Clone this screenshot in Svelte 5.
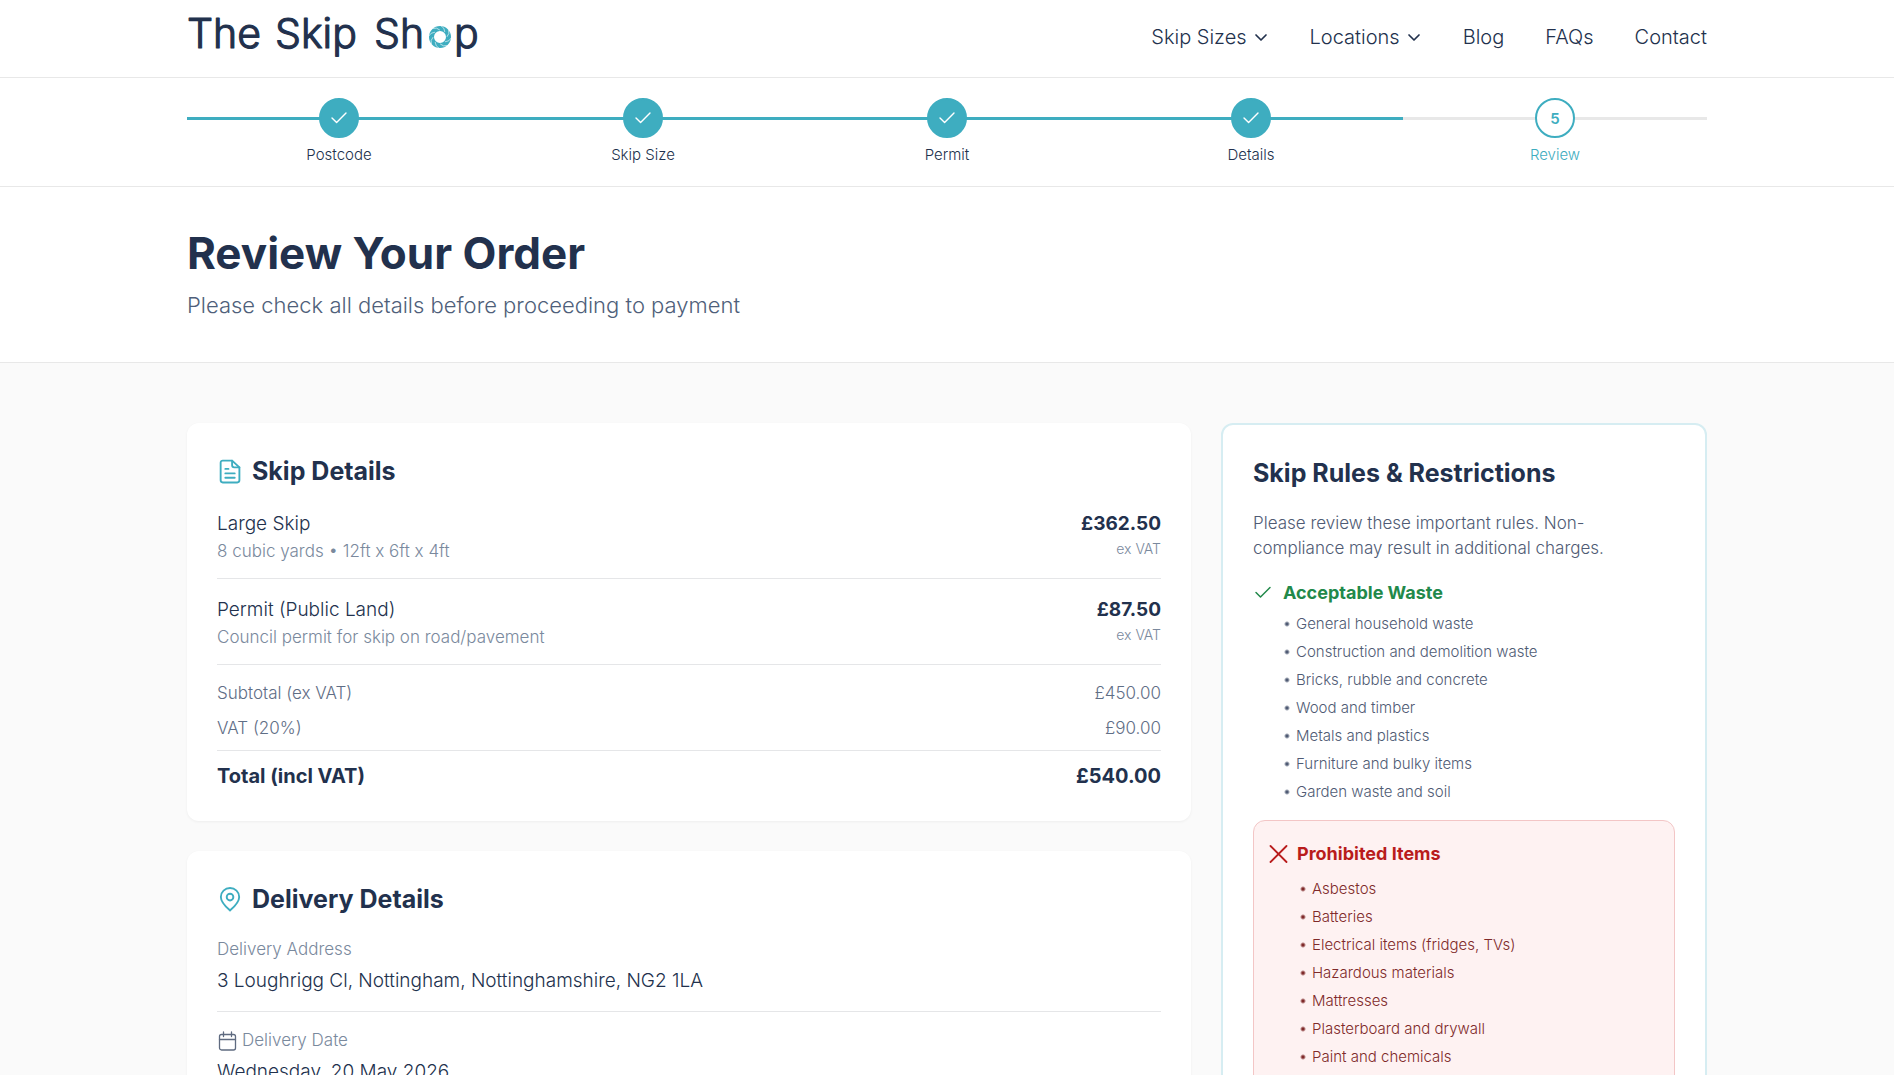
<script>
  const nav = [
    { label: 'Skip Sizes', menu: true },
    { label: 'Locations', menu: true },
    { label: 'Blog' },
    { label: 'FAQs' },
    { label: 'Contact' }
  ];
  const steps = ['Postcode', 'Skip Size', 'Permit', 'Details', 'Review'];
  const current = 4;
  const lines = [
    { name: 'Large Skip', note: '8 cubic yards • 12ft x 6ft x 4ft', price: '£362.50' },
    { name: 'Permit (Public Land)', note: 'Council permit for skip on road/pavement', price: '£87.50' }
  ];
  const acceptable = [
    'General household waste',
    'Construction and demolition waste',
    'Bricks, rubble and concrete',
    'Wood and timber',
    'Metals and plastics',
    'Furniture and bulky items',
    'Garden waste and soil'
  ];
  const prohibited = [
    'Asbestos',
    'Batteries',
    'Electrical items (fridges, TVs)',
    'Hazardous materials',
    'Mattresses',
    'Plasterboard and drywall',
    'Paint and chemicals'
  ];
  const blades = [0, 45, 90, 135, 180, 225, 270, 315];
</script>

<header class="bar">
  <div class="container head">
    <a class="logo" href="/" aria-label="The Skip Shop">
      <svg width="294" height="64" viewBox="0 0 294 64">
        <g class="word">
          <text x="0" y="48">The</text>
          <text x="88" y="48">Skip</text>
          <text x="187" y="48">Sh</text>
          <text x="267" y="48">p</text>
        </g>
        <g transform="translate(253 37)">
          <circle r="8.5" fill="none" stroke="#3eadc0" stroke-width="5" />
          {#each blades as a}
            <path d="M1 -11.2 Q4.600 -9.500 4.800 -5" transform="rotate({a})" fill="none" stroke="#fff" stroke-width="0.6" />
          {/each}
        </g>
      </svg>
    </a>
    <nav>
      {#each nav as item}
        {#if item.menu}
          <button type="button">
            {item.label}
            <svg width="16" height="16" viewBox="0 0 16 16" fill="none" stroke="currentColor" stroke-width="1.7" stroke-linecap="round" stroke-linejoin="round"><path d="M3 6l5 5 5-5" /></svg>
          </button>
        {:else}
          <a href="/{item.label.toLowerCase()}">{item.label}</a>
        {/if}
      {/each}
    </nav>
  </div>
</header>

<section class="bar">
  <ol class="container steps">
    {#each steps as step, i}
      <li class:done={i < current} class:active={i === current}>
        <div class="track">
          <span class="dot">
            {#if i < current}
              <svg width="20" height="20" viewBox="0 0 20 20" fill="none" stroke="currentColor" stroke-width="1.4" stroke-linecap="round" stroke-linejoin="round"><path d="M3 10l4.600 4.600L17 5" /></svg>
            {:else}
              {i + 1}
            {/if}
          </span>
        </div>
        <span class="step-name">{step}</span>
      </li>
    {/each}
  </ol>
</section>

<section class="bar">
  <div class="container hero">
    <h1>Review Your Order</h1>
    <p>Please check all details before proceeding to payment</p>
  </div>
</section>

<main>
  <div class="container grid">
    <div class="left">
      <section class="card">
        <h2>
          <svg width="25" height="25" viewBox="0 0 24 24" fill="none" stroke="#3eadc0" stroke-width="1.800" stroke-linecap="round" stroke-linejoin="round"><path d="M14.500 1.500H5.500a2 2 0 0 0-2 2v17a2 2 0 0 0 2 2h14a2 2 0 0 0 2-2V8z" /><path d="M14.500 1.500V6a2 2 0 0 0 2 2H21.500M8 9.500h3M8 13.800h9M8 18h9" /></svg>
          Skip Details
        </h2>
        {#each lines as line}
          <div class="row ruled priced">
            <div>
              <p class="item">{line.name}</p>
              <p class="note">{line.note}</p>
            </div>
            <div class="price">
              <strong>{line.price}</strong>
              <small>ex VAT</small>
            </div>
          </div>
        {/each}
        <div class="sums">
          <div class="row"><span>Subtotal (ex VAT)</span><span>£450.00</span></div>
          <div class="row"><span>VAT (20%)</span><span>£90.00</span></div>
        </div>
        <div class="row total"><span>Total (incl VAT)</span><span>£540.00</span></div>
      </section>

      <section class="card">
        <h2>
          <svg width="25" height="25" viewBox="0 0 24 24" fill="none" stroke="#3eadc0" stroke-width="1.800" stroke-linecap="round" stroke-linejoin="round"><path d="M12.500 22.500c-2-1.800-8.800-7.500-8.800-13a8.800 8.500 0 0 1 17.600 0C21.300 15 14.500 20.700 12.500 22.500z" /><circle cx="12.500" cy="9.700" r="3.200" /></svg>
          Delivery Details
        </h2>
        <div class="field ruled">
          <p class="note">Delivery Address</p>
          <p class="value">3 Loughrigg Cl, Nottingham, Nottinghamshire, NG2 1LA</p>
        </div>
        <div class="field">
          <p class="note dated">
            <svg width="20" height="20" viewBox="0 0 20 20" fill="none" stroke="#5f6b80" stroke-width="1.300" stroke-linecap="round" stroke-linejoin="round"><rect x="2.500" y="3.500" width="16" height="15.500" rx="2" /><path d="M2.500 8.500h16M6.500 1v4.500M14.500 1v4.500" /></svg>
            Delivery Date
          </p>
          <p class="value">Wednesday, 20 May 2026</p>
        </div>
      </section>
    </div>

    <aside class="rules">
      <h2>Skip Rules &amp; Restrictions</h2>
      <p class="intro">Please review these important rules. Non-compliance may result in additional charges.</p>
      <h3 class="ok">
        <svg width="20" height="20" viewBox="0 0 20 20" fill="none" stroke="currentColor" stroke-width="1.500" stroke-linecap="round" stroke-linejoin="round"><path d="M3 9.500l4.500 4.500L17 4.500" /></svg>
        Acceptable Waste
      </h3>
      <ul>
        {#each acceptable as t}<li>{t}</li>{/each}
      </ul>
      <div class="danger">
        <h3>
          <svg width="20" height="20" viewBox="0 0 20 20" fill="none" stroke="currentColor" stroke-width="1.800" stroke-linecap="round"><path d="M1.500 2l16 16M17.500 2l-16 16" /></svg>
          Prohibited Items
        </h3>
        <ul>
          {#each prohibited as t}<li>{t}</li>{/each}
        </ul>
      </div>
    </aside>
  </div>
</main>

<style>
  :global(body) {
    margin: 0;
    background: #fff;
    color: #22314d;
    font-family: Inter, "Liberation Sans", sans-serif;
    font-weight: 300;
  }
  h1, h2, h3, p, ul, ol {
    margin: 0;
    padding: 0;
    list-style: none;
  }
  svg {
    display: block;
    flex: none;
  }
  .container {
    box-sizing: border-box;
    width: 100%;
    max-width: 1520px;
    margin: 0 auto;
  }
  .bar {
    border-bottom: 1px solid #e8e8e8;
  }
  .head {
    display: flex;
    justify-content: space-between;
    align-items: flex-start;
    height: 77px;
  }
  .word {
    font-family: Inter, sans-serif;
    font-size: 41px;
    font-weight: 300;
    fill: #22314d;
    stroke: #22314d;
    stroke-width: 1.2px;
    stroke-linejoin: round;
  }
  nav {
    display: flex;
    align-items: center;
    align-self: center;
    gap: 41px;
    padding-bottom: 3px;
    font-size: 20px;
    line-height: 28px;
  }
  nav a, nav button {
    display: flex;
    align-items: center;
    gap: 6px;
    padding: 0;
    border: 0;
    background: none;
    color: inherit;
    font: inherit;
    text-decoration: none;
  }
  .steps {
    display: flex;
    padding: 20px 0;
  }
  .steps li {
    flex: 1;
    text-align: center;
  }
  .track {
    display: flex;
    justify-content: center;
    background: linear-gradient(#e8e8e8, #e8e8e8) center / 100% 3px no-repeat;
  }
  .done .track {
    background-image: linear-gradient(#3eadc0, #3eadc0);
  }
  .dot {
    box-sizing: border-box;
    display: flex;
    align-items: center;
    justify-content: center;
    width: 40px;
    height: 40px;
    border: 2px solid #3eadc0;
    border-radius: 50%;
    background: #fff;
    color: #3eadc0;
    font-size: 15px;
    font-weight: 600;
  }
  .done .dot {
    background: #3eadc0;
    color: #fff;
  }
  .step-name {
    display: block;
    margin-top: 6px;
    font-size: 15px;
    line-height: 22px;
  }
  .active .step-name {
    color: #3eadc0;
  }
  .hero {
    padding: 40px 0;
  }
  h1 {
    font-size: 44px;
    font-weight: 700;
    line-height: 52px;
  }
  .hero p {
    margin-top: 10px;
    color: #4f5f7a;
    font-size: 22px;
    line-height: 33px;
  }
  main {
    padding: 60px 0;
    background: #fafafa;
  }
  .grid {
    display: grid;
    grid-template-columns: minmax(0, 1004fr) minmax(0, 486fr);
    gap: 30px;
  }
  .left {
    display: flex;
    flex-direction: column;
    gap: 30px;
  }
  .card {
    padding: 30px;
    border-radius: 12px;
    background: #fff;
    box-shadow: 0 1px 3px rgba(0, 0, 0, 0.05);
  }
  h2 {
    display: flex;
    align-items: center;
    gap: 10px;
    font-size: 25px;
    font-weight: 700;
    line-height: 36px;
  }
  .card h2 {
    margin-bottom: 4px;
  }
  .row {
    display: flex;
    justify-content: space-between;
  }
  .field {
    padding: 15px 0;
  }
  .priced {
    padding: 16px 0 13px;
  }
  .ruled {
    border-bottom: 1px solid #e5e6e8;
  }
  .item {
    font-size: 19px;
    line-height: 29px;
  }
  .note {
    color: #7a899d;
    font-size: 17px;
    line-height: 27px;
  }
  .price {
    text-align: right;
  }
  .price strong {
    display: block;
    font-size: 19px;
    font-weight: 700;
    line-height: 29px;
  }
  .price small {
    display: block;
    color: #7a899d;
    font-size: 14px;
    line-height: 21px;
  }
  .sums {
    padding: 11px 0 4px;
    border-bottom: 1px solid #e5e6e8;
    color: #5f6e86;
    font-size: 17px;
    line-height: 35px;
  }
  .total {
    padding-top: 10px;
    font-size: 20px;
    font-weight: 700;
    line-height: 30px;
  }
  .dated {
    display: flex;
    align-items: center;
    gap: 5px;
  }
  .value {
    margin-top: 3px;
    font-size: 19px;
    line-height: 30px;
  }
  .rules {
    padding: 30px;
    border: 2px solid #d6edf2;
    border-radius: 12px;
    background: #fff;
  }
  .intro {
    margin-top: 20px;
    color: #4f5b74;
    font-size: 17px;
    line-height: 25px;
  }
  h3 {
    display: flex;
    align-items: center;
    gap: 10px;
    font-size: 18px;
    font-weight: 700;
    line-height: 30px;
  }
  .ok {
    margin: 17px 0 2px;
    color: #22894a;
  }
  .rules li {
    padding-left: 43px;
    color: #4f5b74;
    font-size: 15px;
    line-height: 28px;
    background: radial-gradient(circle at 34px 14px, currentColor 1px, transparent 3px);
  }
  .danger {
    margin-top: 14px;
    padding: 18px 15px 23px;
    border: 1px solid #f3c6c6;
    border-radius: 12px;
    background: #fef2f2;
  }
  .danger h3 {
    gap: 8px;
    margin-bottom: 6px;
    color: #b91c1c;
  }
  .danger li {
    color: #7f2a2a;
  }
</style>
